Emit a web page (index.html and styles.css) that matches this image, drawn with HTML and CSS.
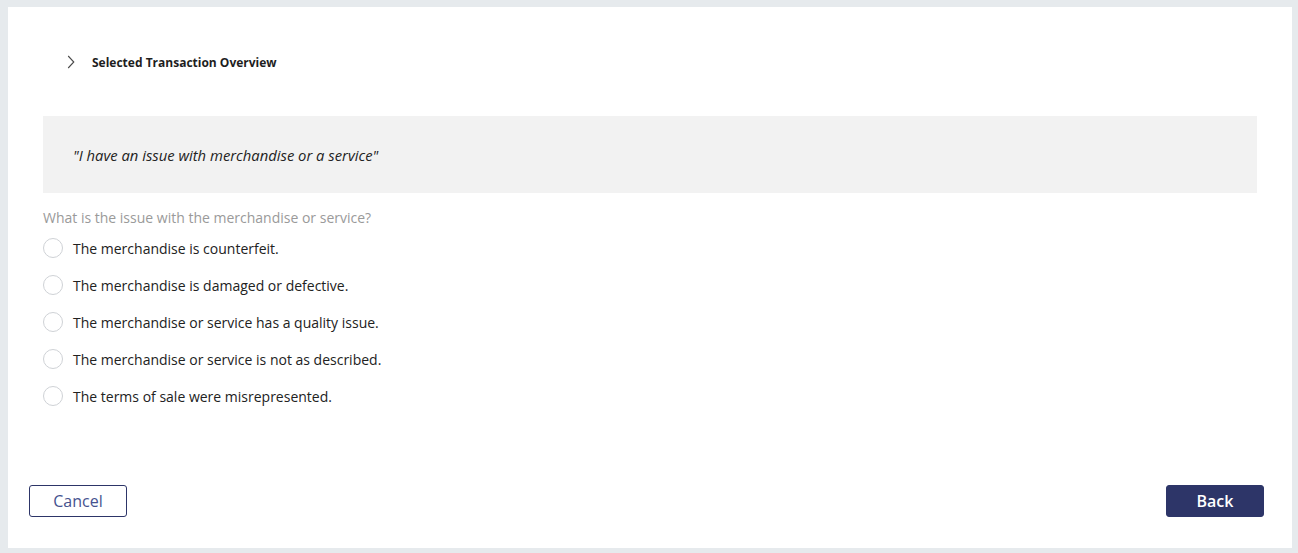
FILE: index.html
```html
<!DOCTYPE html>
<html lang="en">
<head>
<meta charset="utf-8">
<title>Dispute</title>
<link rel="stylesheet" href="styles.css">
</head>
<body>
<div class="panel">
  <div class="header">
    <svg class="chev" width="8" height="14" viewBox="0 0 8 14" aria-hidden="true"><path d="M1.2 1 L6.8 7 L1.2 13" fill="none" stroke="#4a4a4a" stroke-width="1.1"/></svg>
    <span class="header-title">Selected Transaction Overview</span>
  </div>
  <div class="quote">"I have an issue with merchandise or a service"</div>
  <div class="question">What is the issue with the merchandise or service?</div>
  <div class="options">
    <label class="option"><span class="radio"></span><span>The merchandise is counterfeit.</span></label>
    <label class="option"><span class="radio"></span><span>The merchandise is damaged or defective.</span></label>
    <label class="option"><span class="radio"></span><span>The merchandise or service has a quality issue.</span></label>
    <label class="option"><span class="radio"></span><span>The merchandise or service is not as described.</span></label>
    <label class="option"><span class="radio"></span><span>The terms of sale were misrepresented.</span></label>
  </div>
  <div class="footer">
    <button class="btn btn-outline">Cancel</button>
    <button class="btn btn-primary">Back</button>
  </div>
</div>
</body>
</html>
```
FILE: styles.css
```css
* { box-sizing: border-box; }
html, body { margin: 0; padding: 0; }
body {
  background: #e6eaed;
  padding: 7px 6px 5px 8px;
  font-family: "Open Sans", "Liberation Sans", sans-serif;
  color: #222;
}
.panel {
  background: #fff;
  height: 541px;
  display: flex;
  flex-direction: column;
  padding: 45px 35px 31px 35px;
}
.header {
  display: flex;
  align-items: center;
  height: 20px;
  margin-left: 24px;
  gap: 17px;
}
.chev { display: block; }
.header-title {
  font-size: 12px;
  font-weight: 700;
  color: #1e1e1e;
}
.quote {
  margin-top: 44px;
  height: 77px;
  background: #f2f2f2;
  display: flex;
  align-items: center;
  padding: 0 30px;
  font-size: 14.8px;
  font-style: italic;
  color: #222;
}
.question {
  margin-top: 15px;
  font-size: 14px;
  line-height: 20px;
  color: #9a9a9a;
}
.options {
  margin-top: 10px;
  display: flex;
  flex-direction: column;
  gap: 17px;
}
.option {
  display: flex;
  align-items: center;
  height: 20px;
  gap: 10px;
  font-size: 14px;
  color: #222;
}
.radio {
  width: 20px;
  height: 20px;
  border: 1px solid #cfd2d6;
  border-radius: 50%;
  background: #fff;
  flex: none;
}
.footer {
  margin-top: auto;
  margin-left: -14px;
  margin-right: -7px;
  display: flex;
  justify-content: space-between;
}
.btn {
  width: 98px;
  height: 32px;
  border-radius: 3px;
  font-family: "Open Sans", "Liberation Sans", sans-serif;
  font-size: 16px;
  padding: 0;
  cursor: pointer;
}
.btn-outline {
  background: #fff;
  border: 1px solid #2d3568;
  color: #46528f;
}
.btn-primary {
  background: #2d3568;
  border: 1px solid #2d3568;
  color: #fff;
  font-weight: 600;
}
```
